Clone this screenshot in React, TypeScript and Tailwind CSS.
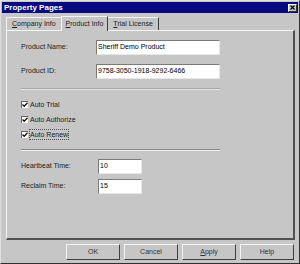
import { useState } from 'react';

const font = { fontFamily: '"Liberation Sans", Arial, sans-serif' };

function Field({ value, w }: { value: string; w: string }) {
  return (
    <div className={`${w} h-[15px] bg-white border-t border-l border-t-[#7a7a7a] border-l-[#7a7a7a] border-b border-r border-b-[#e8e8e8] border-r-[#e8e8e8] flex items-center px-[1px] text-[7px] text-black`}>
      {value}
    </div>
  );
}

function Check({ label, focus }: { label: string; focus?: boolean }) {
  return (
    <div className="flex items-center h-[15px]">
      <div className="w-[7px] h-[7px] bg-white border-t border-l border-[#666] flex items-center justify-center">
        <svg width="6" height="6" viewBox="0 0 6 6">
          <path d="M0.5 2.5 L2.2 4.3 L5.5 0.8" stroke="#111" strokeWidth="1.3" fill="none" />
        </svg>
      </div>
      <span className={`ml-[2px] text-[7px] text-[#222] leading-[9px] ${focus ? 'outline outline-1 outline-dotted outline-[#555]' : ''}`}>{label}</span>
    </div>
  );
}

function Button({ label, under }: { label: string; under?: boolean }) {
  return (
    <div className="w-[54px] h-[16px] bg-[#c6c6c6] border-t border-l border-t-[#f4f4f4] border-l-[#f4f4f4] border-b border-r border-b-[#404040] border-r-[#404040] flex items-center justify-center text-[7px] text-[#333]">
      {under ? (
        <span>
          <span className="underline">{label[0]}</span>
          {label.slice(1)}
        </span>
      ) : (
        label
      )}
    </div>
  );
}

export default function App() {
  const [tab] = useState(1);
  const tabs = ['Company Info', 'Product Info', 'Trial License'];

  return (
    <div style={font} className="w-[300px] h-[264px] bg-[#c6c6c6] border-t border-l border-[#e0e0e0] border-r border-b border-r-[#303030] border-b-[#303030] flex flex-col overflow-hidden">
      <div className="h-[11px] mx-[1px] mt-[1px] bg-[#0a0a80] flex items-center justify-between pl-[2px] pr-[1px]">
        <span className="text-white font-bold text-[8px] leading-none">Property Pages</span>
        <div className="w-[9px] h-[8px] bg-[#c6c6c6] border-t border-l border-[#fff] border-b border-r border-b-[#333] border-r-[#333] flex items-center justify-center">
          <svg width="5" height="5" viewBox="0 0 5 5">
            <path d="M0.5 0.5 L4.5 4.5 M4.5 0.5 L0.5 4.5" stroke="#000" strokeWidth="1.2" />
          </svg>
        </div>
      </div>

      <div className="flex items-end pl-[5px] mt-[1px] h-[16px]">
        {tabs.map((t, i) =>
          i === tab ? (
            <div key={t} className="relative z-10 -mx-[1px] h-[15px] px-[4px] bg-[#c6c6c6] border-t border-l border-[#f4f4f4] border-r border-r-[#404040] flex items-center text-[7px] text-[#222] -mb-[1px]">
              <span><span className="underline">P</span>roduct Info</span>
            </div>
          ) : (
            <div key={t} className="h-[13px] px-[5px] border-t border-l border-[#f4f4f4] border-r border-r-[#404040] flex items-center text-[7px] text-[#222]">
              <span><span className="underline">{t[0]}</span>{t.slice(1)}</span>
            </div>
          )
        )}
      </div>

      <div className="ml-[5px] w-[289px] h-[210px] border-t border-l border-[#f4f4f4] border-r-2 border-b-2 border-r-[#505050] border-b-[#505050] flex flex-col px-[14px] pt-[9px]">
        <div className="flex items-center h-[15px]">
          <span className="w-[75px] text-[7px] text-[#222]">Product Name:</span>
          <Field value="Sheriff Demo Product" w="w-[124px]" />
        </div>
        <div className="flex items-center h-[15px] mt-[9px]">
          <span className="w-[75px] text-[7px] text-[#222]">Product ID:</span>
          <Field value="9758-3050-1918-9292-6466" w="w-[124px]" />
        </div>
        <div className="w-[199px] h-[2px] mt-[9px] border-t border-[#a8a8a8] border-b border-b-[#e4e4e4]" />
        <div className="flex flex-col mt-[7px]">
          <Check label="Auto Trial" />
          <Check label="Auto Authorize" />
          <Check label="Auto Renew" focus />
        </div>
        <div className="w-[199px] h-[2px] mt-[7px] border-t border-[#8a8a8a] border-b border-b-[#f0f0f0]" />
        <div className="flex items-center h-[15px] mt-[8px]">
          <span className="w-[77px] text-[7px] text-[#222]">Heartbeat Time:</span>
          <Field value="10" w="w-[44px]" />
        </div>
        <div className="flex items-center h-[15px] mt-[5px]">
          <span className="w-[77px] text-[7px] text-[#222]">Reclaim Time:</span>
          <Field value="15" w="w-[44px]" />
        </div>
      </div>

      <div className="flex justify-end gap-[4px] pr-[5px] mt-[4px]">
        <Button label="OK" />
        <Button label="Cancel" />
        <Button label="Apply" under />
        <Button label="Help" />
      </div>
    </div>
  );
}
